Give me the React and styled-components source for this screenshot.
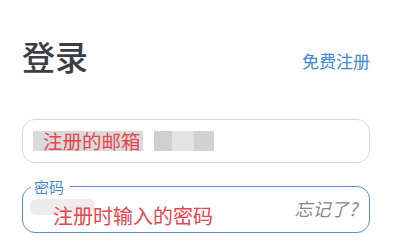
import React from "react";
import styled, { createGlobalStyle } from "styled-components";

const Global = createGlobalStyle`
  html, body { margin: 0; padding: 0; background: #fff; }
  body { font-family: "Noto Sans CJK SC", "Noto Sans", sans-serif; }
`;

const Page = styled.div`
  width: 400px;
  height: 240px;
  box-sizing: border-box;
  padding: 31px 30px 0 22px;
  overflow: hidden;
`;

const Header = styled.div`
  display: flex;
  justify-content: space-between;
  align-items: flex-end;
  margin-bottom: 38px;
`;

const Title = styled.h1`
  margin: 0;
  font-size: 33px;
  line-height: 50px;
  font-weight: 500;
  color: #3b3e45;
`;

const RegisterLink = styled.a`
  font-size: 17px;
  line-height: 22px;
  color: #3f88d6;
  text-decoration: none;
  margin-bottom: 9px;
`;

const EmailBox = styled.div`
  height: 44px;
  box-sizing: border-box;
  border: 1.5px solid #d9d9d9;
  border-radius: 13px;
  display: flex;
  align-items: center;
  padding-left: 10px;
`;

const Redact = styled.span`
  display: inline-block;
  height: 20px;
  width: ${(p) => p.$w}px;
  background: ${(p) => p.$c};
  margin-left: ${(p) => p.$ml || 0}px;
`;

const RedText = styled.span`
  display: inline-flex;
  align-items: center;
  height: 20px;
  font-size: 19.5px;
  line-height: 20px;
  color: #e8454b;
  background: ${(p) => p.$bg || "transparent"};
  padding-left: ${(p) => p.$pl || 0}px;
  padding-right: ${(p) => p.$pr || 0}px;
`;

const PasswordBox = styled.fieldset`
  margin: 16px 0 0 0;
  height: 54px;
  box-sizing: border-box;
  border: 1.5px solid #5b8fd3;
  border-radius: 13px;
  padding: 0 12px 0 8px;
  position: relative;
`;

const Legend = styled.legend`
  font-size: 15px;
  line-height: 15px;
  color: #3f88d6;
  padding: 0 6px 0 3px;
  margin-left: 0;
`;

const PasswordRow = styled.div`
  display: flex;
  justify-content: space-between;
  align-items: flex-start;
`;

const Blob = styled.span`
  position: absolute;
  left: 7px;
  top: 5px;
  width: 65px;
  height: 16px;
  border-radius: 6px;
  background: #ececec;
`;

const PwText = styled.span`
  position: relative;
  font-size: 20px;
  line-height: 22px;
  color: #e8454b;
  margin: 11px 0 0 22px;
`;

const Forgot = styled.span`
  font-size: 18px;
  line-height: 20px;
  font-style: italic;
  color: #8a8a8a;
  margin-top: 4px;
`;

export default function App() {
  return (
    <Page>
      <Global />
      <Header>
        <Title>登录</Title>
        <RegisterLink href="#">免费注册</RegisterLink>
      </Header>
      <EmailBox>
        <RedText $bg="#dadada" $pl={10} $pr={2}>注册的邮箱</RedText>
        <Redact $w={18} $c="#cfcfcf" $ml={11} />
        <Redact $w={22} $c="#e3e3e3" />
        <Redact $w={20} $c="#d2d2d2" />
      </EmailBox>
      <PasswordBox>
        <Legend>密码</Legend>
        <Blob />
        <PasswordRow>
          <PwText>注册时输入的密码</PwText>
          <Forgot>忘记了?</Forgot>
        </PasswordRow>
      </PasswordBox>
    </Page>
  );
}
